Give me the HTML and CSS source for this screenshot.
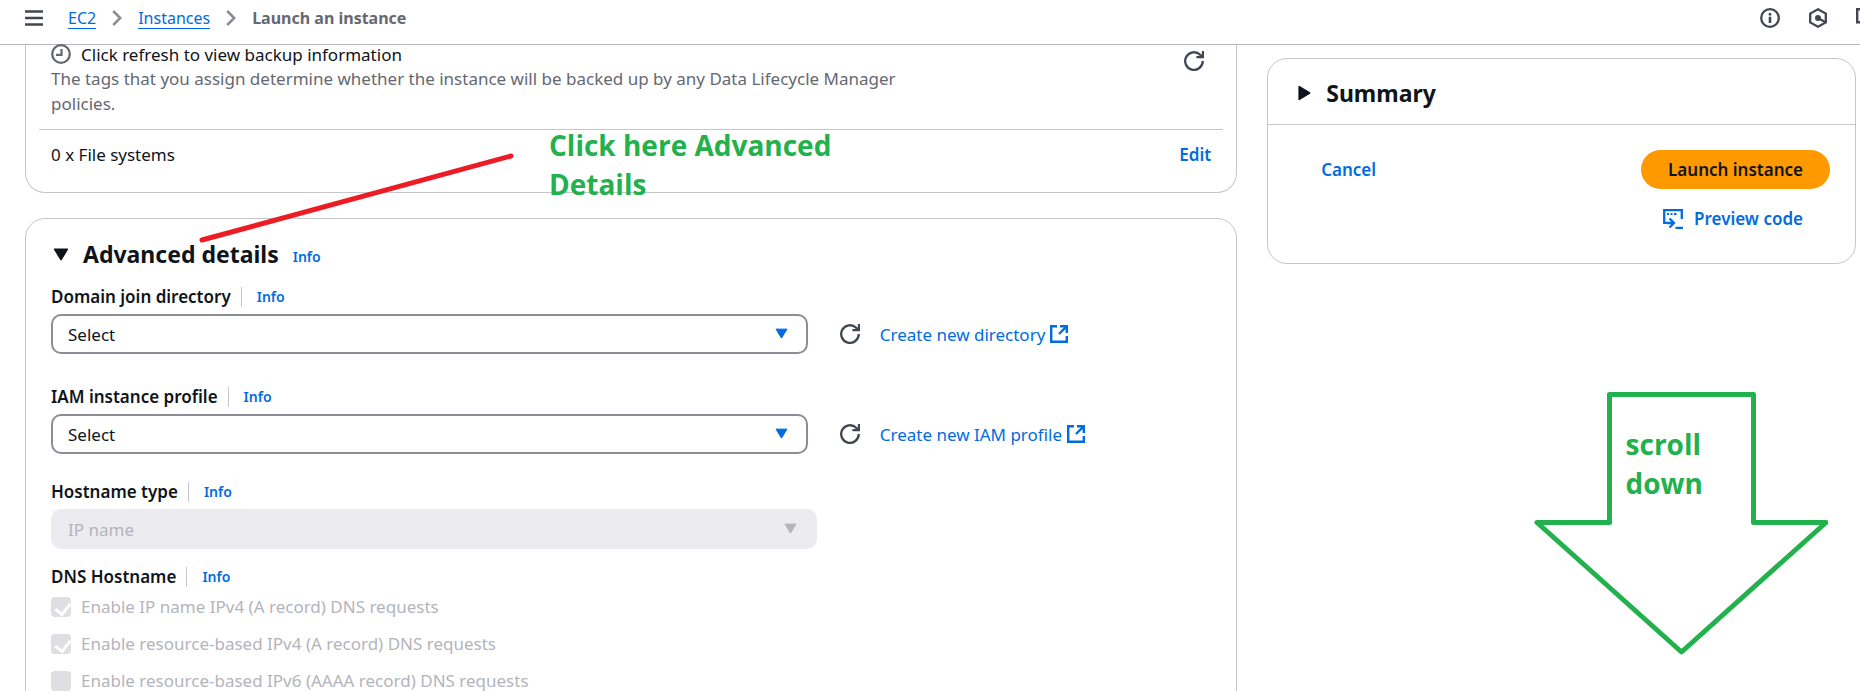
FILE: index.html
```html
<!DOCTYPE html>
<html lang="en">
<head>
<meta charset="utf-8">
<title>Launch an instance | EC2</title>
<link rel="stylesheet" href="styles.css">
</head>
<body>
<svg class="sprite" aria-hidden="true">
  <symbol id="i-refresh" viewBox="0 0 20 20"><path d="M18.800 10a8.800 8.800 0 1 1-2.600-6.200L18.600 6M19 0v6.200h-6.600" fill="none" stroke="currentColor" stroke-width="2.300"/></symbol>
  <symbol id="i-external" viewBox="0 0 18 18"><path d="M7 1.200H1.200v15.600h15.600V11M10 1.200h6.800V8M16.500 1.500L9 9" fill="none" stroke="currentColor" stroke-width="2.400"/></symbol>
  <symbol id="i-down" viewBox="0 0 16 13"><path d="M1.600 1.200h12.800L8 11.600z" fill="currentColor" stroke="currentColor" stroke-width="1.600" stroke-linejoin="round"/></symbol>
  <symbol id="i-chevron" viewBox="0 0 10 16"><path d="M1.200 1l7 7-7 7" fill="none" stroke="currentColor" stroke-width="2.500"/></symbol>
</svg>
<header class="topbar">
  <button class="icon-button" type="button" aria-label="Open navigation">
    <svg width="18" height="16" viewBox="0 0 18 16"><path d="M0 1.500h18M0 8h18M0 14.500h18" stroke="currentColor" stroke-width="2.400"/></svg>
  </button>
  <nav class="crumbs" aria-label="Breadcrumbs">
    <a href="#ec2">EC2</a>
    <svg class="chevron" width="10" height="16"><use href="#i-chevron"/></svg>
    <a href="#instances">Instances</a>
    <svg class="chevron" width="10" height="16"><use href="#i-chevron"/></svg>
    <span class="current">Launch an instance</span>
  </nav>
  <div class="tools">
    <button class="icon-button" type="button" aria-label="Help panel">
      <svg width="20" height="20" viewBox="0 0 20 20"><circle cx="10" cy="10" r="8.800" fill="none" stroke="currentColor" stroke-width="2.300"/><path d="M10 5v2.400M10 8.800V15" stroke="currentColor" stroke-width="2.600"/></svg>
    </button>
    <button class="icon-button" type="button" aria-label="Diagnostics">
      <svg width="18" height="20" viewBox="0 0 18 20"><path d="M9 1.300l7.800 4.300v8.800L9 18.700l-7.800-4.300V5.600z" fill="none" stroke="currentColor" stroke-width="2.300"/><circle cx="9" cy="10" r="3" fill="currentColor"/><path d="M9 10l7 4" stroke="currentColor" stroke-width="2.300"/></svg>
    </button>
    <button class="icon-button" type="button" aria-label="Shell">
      <svg width="20" height="20" viewBox="0 0 20 20"><path d="M19 1.200H1.200v13H19" fill="none" stroke="currentColor" stroke-width="2.400"/></svg>
    </button>
  </div>
</header>
<div class="page">
  <main class="main">
    <section class="card storage">
      <div class="backup">
        <div class="backup-text">
          <div class="backup-title">
            <svg width="20" height="20" viewBox="0 0 20 20"><circle cx="10" cy="10" r="8.800" fill="none" stroke="currentColor" stroke-width="2.300"/><path d="M10.500 5v5.800H5" fill="none" stroke="currentColor" stroke-width="2.200"/></svg>
            <span>Click refresh to view backup information</span>
          </div>
          <p>The tags that you assign determine whether the instance will be backed up by any Data Lifecycle Manager policies.</p>
        </div>
        <button class="icon-button" type="button" aria-label="Refresh backup information"><svg width="20" height="20"><use href="#i-refresh"/></svg></button>
      </div>
      <div class="files">
        <span>0 x File systems</span>
        <button class="link-button" type="button">Edit</button>
      </div>
    </section>
    <section class="card advanced">
      <div class="section-head">
        <svg width="16" height="13"><use href="#i-down"/></svg>
        <h2>Advanced details</h2>
        <a class="info" href="#info">Info</a>
      </div>
      <div class="field">
        <div class="label-row"><label for="domain">Domain join directory</label><a class="info" href="#info">Info</a></div>
        <div class="control-row">
          <div class="select-box"><select id="domain"><option>Select</option></select><svg class="caret" width="13" height="11" viewBox="0 0 16 13"><use href="#i-down"/></svg></div>
          <button class="icon-button" type="button" aria-label="Refresh directories"><svg width="20" height="20"><use href="#i-refresh"/></svg></button>
          <a class="external" href="#directory">Create new directory<svg width="18" height="18"><use href="#i-external"/></svg></a>
        </div>
      </div>
      <div class="field profile">
        <div class="label-row"><label for="iam">IAM instance profile</label><a class="info" href="#info">Info</a></div>
        <div class="control-row">
          <div class="select-box"><select id="iam"><option>Select</option></select><svg class="caret" width="13" height="11" viewBox="0 0 16 13"><use href="#i-down"/></svg></div>
          <button class="icon-button" type="button" aria-label="Refresh profiles"><svg width="20" height="20"><use href="#i-refresh"/></svg></button>
          <a class="external" href="#profile">Create new IAM profile<svg width="18" height="18"><use href="#i-external"/></svg></a>
        </div>
      </div>
      <div class="field compact">
        <div class="label-row"><label for="host">Hostname type</label><a class="info" href="#info">Info</a></div>
        <div class="select-box disabled"><select id="host" disabled><option>IP name</option></select><svg class="caret" width="13" height="11" viewBox="0 0 16 13"><use href="#i-down"/></svg></div>
      </div>
      <div class="field">
        <div class="label-row"><span class="label">DNS Hostname</span><a class="info" href="#info">Info</a></div>
        <div class="checks">
          <label><input type="checkbox" checked disabled>Enable IP name IPv4 (A record) DNS requests</label>
          <label><input type="checkbox" checked disabled>Enable resource-based IPv4 (A record) DNS requests</label>
          <label><input type="checkbox" disabled>Enable resource-based IPv6 (AAAA record) DNS requests</label>
        </div>
      </div>
    </section>
  </main>
  <aside class="side">
    <section class="card">
      <div class="summary-head">
        <svg width="13" height="16" viewBox="0 0 13 16"><path d="M1.200 1.600v12.800L11.600 8z" fill="currentColor" stroke="currentColor" stroke-width="1.600" stroke-linejoin="round"/></svg>
        <h2>Summary</h2>
      </div>
      <div class="summary-body">
        <button class="link-button cancel" type="button">Cancel</button>
        <div class="actions">
          <button class="primary" type="button">Launch instance</button>
          <button class="link-button preview" type="button">
            <svg width="20" height="20" viewBox="0 0 20 20"><path d="M5 13.800H1.200V1.200h17.600V10M4 14h7M6.500 9.500L11 14l-4.500 4.500M12.500 18.800H20" fill="none" stroke="currentColor" stroke-width="2.300"/><path d="M4 5h2M7.500 5h2M11 5h2.500" stroke="currentColor" stroke-width="2"/></svg>
            Preview code
          </button>
        </div>
      </div>
    </section>
  </aside>
</div>
<svg class="red-line" width="316" height="92" viewBox="0 0 316 92"><path d="M3 88L312 4" stroke="#ed1c24" stroke-width="5" stroke-linecap="round"/></svg>
<p class="note note-click">Click here Advanced<br>Details</p>
<svg class="arrow" width="294" height="266" viewBox="0 0 294 266"><path d="M3 132.500h72.500V4.500h144v128H292L147.500 262z" fill="none" stroke="#22b14c" stroke-width="5" stroke-linejoin="round"/></svg>
<p class="note note-scroll">scroll<br>down</p>
</body>
</html>
```
FILE: styles.css
```css
* { box-sizing: border-box; }
html, body { height: 100%; }
body {
  margin: 0;
  position: relative;
  display: flex;
  flex-direction: column;
  overflow: hidden;
  background: #fff;
  color: #0f141a;
  font-family: "Noto Sans", "Open Sans", sans-serif;
  font-size: 17px;
  line-height: 25px;
}
button, select, input { font: inherit; color: inherit; }
button { padding: 0; border: 0; background: none; cursor: pointer; }
svg { display: block; flex: none; }
a { color: #006ce0; text-decoration: none; }
h2, p { margin: 0; }
.sprite { position: absolute; width: 0; height: 0; }
.icon-button { flex: none; color: #424650; }

.topbar {
  flex: none;
  display: flex;
  align-items: center;
  height: 45px;
  padding: 0 0 8px 25px;
  border-bottom: 1px solid #b4b4bb;
}
.crumbs { display: flex; align-items: center; gap: 16px; margin-left: 25px; font-size: 16px; }
.crumbs a { line-height: 20px; border-bottom: 1px solid #006ce0; }
.chevron { color: #8c8c94; }
.current { color: #656871; font-weight: 700; }
.tools { display: flex; gap: 29px; margin-left: auto; margin-right: -16px; }

.page {
  flex: 1;
  display: grid;
  grid-template-columns: 35fr 17fr;
  gap: 30px;
  padding: 0 4px 0 25px;
  min-height: 0;
}
.card { border: 1px solid #c6c6cd; border-radius: 20px; }
.storage { border-top: 0; border-radius: 0 0 20px 20px; padding: 0 13px; }
.backup {
  display: flex;
  justify-content: space-between;
  align-items: flex-start;
  padding: 0 19px 13px 12px;
  border-bottom: 1px solid #c6c6cd;
}
.backup .icon-button { margin-top: 6px; }
.backup-text { width: 75%; color: #656871; }
.backup-title { display: flex; align-items: center; gap: 10px; height: 18px; margin-bottom: 3px; }
.backup-title span { color: #0f141a; }
.files { display: flex; justify-content: space-between; padding: 12px 12px 25px; }
.link-button { color: #006ce0; font-weight: 600; }

.advanced { margin-top: 25px; padding: 20px 25px; }
.section-head { display: flex; align-items: center; gap: 14px; padding-left: 2px; margin-bottom: 18px; }
.section-head .info { padding-top: 4px; }
h2 { font-size: 23px; line-height: 30px; font-weight: 700; }
.info { font-size: 14px; font-weight: 600; }
.field { margin-bottom: 33px; }
.field.profile { margin-bottom: 28px; }
.field.compact { margin-bottom: 18px; }
.label-row { display: flex; align-items: center; line-height: 20px; margin-bottom: 7px; }
.label-row label, .label { font-weight: 600; }
.label-row .info { margin-left: 10px; padding-left: 15px; border-left: 1px solid #c6c6cd; }
.control-row { display: flex; align-items: center; }
.control-row .select-box { width: calc(66% - 9px); }
.control-row .icon-button { margin: 0 20px 0 32px; }
.select-box { position: relative; width: 66%; }
select {
  display: block;
  width: 100%;
  height: 40px;
  padding: 0 40px 0 15px;
  border: 2px solid #8c8c94;
  border-radius: 10px;
  background: #fff;
  appearance: none;
}
select:disabled { border-color: #ebebf0; background: #ebebf0; color: #b4b4bb; opacity: 1; }
.caret { position: absolute; right: 20px; top: 14px; color: #006ce0; pointer-events: none; }
.disabled .caret { color: #b4b4bb; }
.external { display: flex; align-items: center; gap: 5px; }
.checks { display: grid; gap: 12px; color: #b4b4bb; }
.checks label { display: flex; align-items: center; gap: 10px; }
.checks input {
  appearance: none;
  width: 20px;
  height: 20px;
  margin: 0;
  border-radius: 4px;
  background: #dedee3;
}
.checks input:checked::after {
  content: "";
  display: block;
  width: 7px;
  height: 12px;
  margin: 3px 7px;
  border: solid #fff;
  border-width: 0 3px 3px 0;
  transform: rotate(38deg);
}

.side { padding-top: 13px; }
.summary-head {
  display: flex;
  align-items: center;
  gap: 15px;
  padding: 19px 30px 16px;
  border-bottom: 1px solid #c6c6cd;
}
.summary-body { display: flex; justify-content: space-between; align-items: flex-start; padding: 25px 25px 25px 53px; }
.cancel { margin-top: 7px; }
.actions { display: flex; flex-direction: column; align-items: flex-end; gap: 10px; }
.primary { height: 39px; padding: 0 27px; border-radius: 20px; background: #ff9900; font-weight: 600; }
.preview { display: flex; align-items: center; gap: 11px; height: 39px; margin-right: 27px; }

/* Annotations drawn over the page */
.red-line, .arrow, .note { position: absolute; }
.red-line { left: 199px; top: 152px; }
.arrow { right: 32px; top: 390px; }
.note { color: #22b14c; font-family: "Open Sans", "Noto Sans", sans-serif; font-size: 28px; line-height: 39px; font-weight: 700; }
.note-click { left: 549px; top: 126px; }
.note-scroll { right: 157px; top: 425px; }
```
